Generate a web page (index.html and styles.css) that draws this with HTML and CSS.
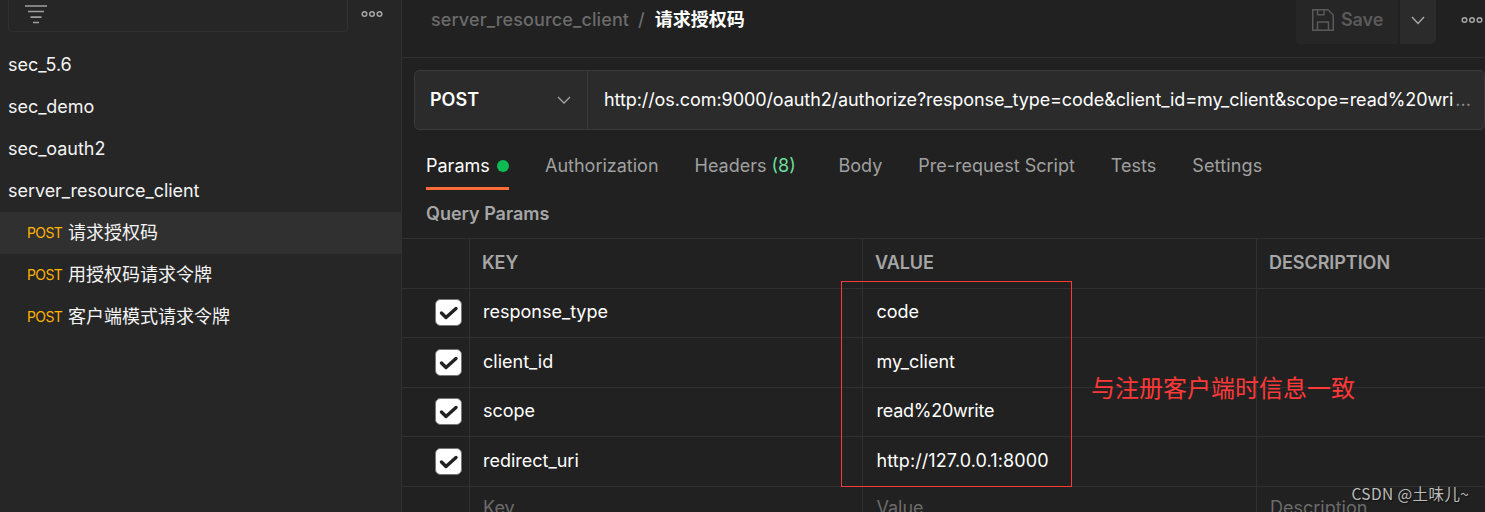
FILE: index.html
```html
<!DOCTYPE html>
<html lang="zh-CN">
<head>
<meta charset="utf-8">
<title>请求授权码</title>
<link rel="stylesheet" href="styles.css">
</head>
<body>
<div class="app">
  <aside class="sidebar">
    <div class="side-top">
      <div class="filter">
        <svg class="filter-icon" width="22" height="19" viewBox="0 0 22 19"><path d="M0 1h22M3 6.500h16M5.500 12.200h11M8 17.500h6" stroke="#a0a0a0" stroke-width="1.700"/></svg>
      </div>
      <svg class="dots" width="22" height="8" viewBox="0 0 22 8"><g fill="none" stroke="#a6a6a6" stroke-width="1.500"><circle cx="3.500" cy="4" r="2.300"/><circle cx="11" cy="4" r="2.300"/><circle cx="18.500" cy="4" r="2.300"/></g></svg>
    </div>
    <div class="collection">sec_5.6</div>
    <div class="collection">sec_demo</div>
    <div class="collection">sec_oauth2</div>
    <div class="collection">server_resource_client</div>
    <div class="request selected"><span class="verb">POST</span><span>请求授权码</span></div>
    <div class="request"><span class="verb">POST</span><span>用授权码请求令牌</span></div>
    <div class="request"><span class="verb">POST</span><span>客户端模式请求令牌</span></div>
  </aside>
  <main class="main">
    <header class="header">
      <div class="crumbs"><span class="crumb-parent">server_resource_client</span><span class="slash">/</span><span class="crumb-name">请求授权码</span></div>
      <div class="actions">
        <div class="save">
          <svg width="22" height="22" viewBox="0 0 22 22"><path d="M.75.75H16L21.250 6v15.250H.75zM5.500.75v5h6.500v-5M5.500 21v-8h11v8" fill="none" stroke="#5a5a5a" stroke-width="1.500" stroke-linejoin="round"/></svg>
          <span>Save</span>
        </div>
        <div class="save-more"><svg width="14" height="9" viewBox="0 0 14 9"><path d="M1 1l6 6.500L13 1" fill="none" stroke="#a6a6a6" stroke-width="1.500"/></svg></div>
        <svg class="dots" width="22" height="8" viewBox="0 0 22 8"><g fill="none" stroke="#a6a6a6" stroke-width="1.500"><circle cx="3.500" cy="4" r="2.300"/><circle cx="11" cy="4" r="2.300"/><circle cx="18.500" cy="4" r="2.300"/></g></svg>
      </div>
    </header>
    <div class="urlbar">
      <div class="method"><span>POST</span><svg width="14" height="9" viewBox="0 0 14 9"><path d="M1 1l6 6L13 1" fill="none" stroke="#a6a6a6" stroke-width="1.300"/></svg></div>
      <div class="url"><span class="url-text">http://os.com:9000/oauth2/authorize?response_type=code&amp;client_id=my_client&amp;scope=read%20wri</span><span class="more">...</span></div>
    </div>
    <nav class="tabs">
      <div class="tab active"><span>Params</span><i class="green-dot"></i></div>
      <div class="tab">Authorization</div>
      <div class="tab headers">Headers <span class="count">(8)</span></div>
      <div class="tab">Body</div>
      <div class="tab">Pre-request Script</div>
      <div class="tab">Tests</div>
      <div class="tab settings">Settings</div>
    </nav>
    <div class="section-title"><span>Query Params</span></div>
    <div class="grid">
      <div class="row head"><div class="cell"></div><div class="cell">KEY</div><div class="cell">VALUE</div><div class="cell">DESCRIPTION</div></div>
      <div class="row"><div class="cell check"><svg width="27" height="27" viewBox="0 0 27 27"><rect x=".5" y=".5" width="26" height="26" rx="5" fill="#fff" stroke="#777"/><path d="M6.500 14l4.500 4.500L21 9.500" fill="none" stroke="#212121" stroke-width="3.400" stroke-linecap="round" stroke-linejoin="round"/></svg></div><div class="cell">response_type</div><div class="cell">code</div><div class="cell"></div></div>
      <div class="row tall"><div class="cell check"><svg width="27" height="27" viewBox="0 0 27 27"><rect x=".5" y=".5" width="26" height="26" rx="5" fill="#fff" stroke="#777"/><path d="M6.500 14l4.500 4.500L21 9.500" fill="none" stroke="#212121" stroke-width="3.400" stroke-linecap="round" stroke-linejoin="round"/></svg></div><div class="cell">client_id</div><div class="cell">my_client</div><div class="cell"></div></div>
      <div class="row"><div class="cell check"><svg width="27" height="27" viewBox="0 0 27 27"><rect x=".5" y=".5" width="26" height="26" rx="5" fill="#fff" stroke="#777"/><path d="M6.500 14l4.500 4.500L21 9.500" fill="none" stroke="#212121" stroke-width="3.400" stroke-linecap="round" stroke-linejoin="round"/></svg></div><div class="cell">scope</div><div class="cell encoded">read%20write</div><div class="cell"></div></div>
      <div class="row tall"><div class="cell check"><svg width="27" height="27" viewBox="0 0 27 27"><rect x=".5" y=".5" width="26" height="26" rx="5" fill="#fff" stroke="#777"/><path d="M6.500 14l4.500 4.500L21 9.500" fill="none" stroke="#212121" stroke-width="3.400" stroke-linecap="round" stroke-linejoin="round"/></svg></div><div class="cell">redirect_uri</div><div class="cell address">http://127.0.0.1:8000</div><div class="cell"></div></div>
      <div class="row blank"><div class="cell"></div><div class="cell">Key</div><div class="cell">Value</div><div class="cell">Description</div></div>
    </div>
  </main>
  <div class="note-box"></div>
  <div class="note">与注册客户端时信息一致</div>
  <div class="watermark">CSDN @土味儿~</div>
</div>
</body>
</html>
```
FILE: styles.css
```css
* { box-sizing: border-box; }
body {
  margin: 0;
  background: #212121;
  color: #fff;
  font: 18px/24px Inter, "Noto Sans CJK SC", sans-serif;
  white-space: nowrap;
}
svg { display: block; flex: none; }
.app { position: relative; display: flex; width: 1485px; height: 512px; overflow: hidden; }

.sidebar { width: 402px; flex: none; background: #262626; border-right: 1px solid #303030; }
.side-top { display: flex; height: 44px; padding-left: 8px; align-items: flex-start; }
.filter {
  width: 340px; height: 32px; padding: 5px 0 0 16px;
  border: 1px solid #303030; border-top: 0; border-radius: 0 0 4px 4px;
}
.side-top .dots { margin: 10px 0 0 13px; }
.collection { height: 42px; padding: 9px 0 0 8px; color: #f4f4f4; letter-spacing: -.04px; }
.request { display: flex; height: 42px; padding-left: 27px; align-items: center; color: #f4f4f4; }
.verb { width: 41px; color: #ffb400; font-size: 14px; letter-spacing: -.6px; }
.request.selected { background: #303030; }

.main { flex: 1; min-width: 0; display: flex; flex-direction: column; }
.header { display: flex; flex: none; justify-content: space-between; height: 58px; border-bottom: 1px solid #303030; }
.crumbs { display: flex; padding: 8px 0 0 29px; color: #6b6b6b; font-weight: 500; }
.crumb-parent { letter-spacing: .12px; }
.slash { margin: 0 10px 0 9px; }
.crumb-name { color: #fff; font-weight: 700; }
.actions { display: flex; }
.save {
  display: flex; gap: 7px; width: 102px; height: 44px; padding: 9px 0 0 16px;
  margin-right: 2px; background: #262626; color: #5a5a5a; font-weight: 600; border-radius: 0 0 4px 4px;
}
.save span { margin-top: -1px; letter-spacing: -.1px; }
.save-more { display: flex; width: 36px; height: 44px; padding: 16px 0 0 11px; background: #2b2b2b; border-radius: 0 0 5px 0; }
.actions .dots { margin: 16px 2px 0 25px; }

.urlbar {
  display: flex; flex: none; height: 60px; margin: 12px 0 0 12px;
  background: #2b2b2b; border: 1px solid #3a3a3a; border-radius: 5px;
}
.method {
  display: flex; justify-content: space-between; align-items: center;
  width: 173px; padding: 0 16px 0 15px; border-right: 1px solid #3a3a3a; font-weight: 600;
}
.url { display: flex; align-items: center; flex: 1; padding-left: 16px; }
.url-text { letter-spacing: -.08px; }
.more { margin-left: 2px; color: #8c8c8c; }

.tabs { display: flex; flex: none; gap: 36px; height: 60px; padding-left: 24px; color: #a0a0a0; }
.tab { height: 60px; padding-top: 24px; }
.tab.active { display: flex; gap: 7px; width: 83px; color: #fff; border-bottom: 3px solid #ff6c37; }
.tab.headers { margin-right: 6.700px; }
.tab.settings { letter-spacing: .15px; }
.green-dot { width: 12px; height: 12px; margin-top: 6px; border-radius: 50%; background: #0cbb52; }
.count { color: #6bdd9a; }
.section-title { flex: none; height: 48px; padding: 12px 0 0 24px; color: #a6a6a6; font-weight: 600; }

.grid { display: flex; flex-direction: column; border-top: 1px solid #303030; }
.row { display: grid; flex: none; grid-template-columns: 68px 393px 394px 1fr; height: 49px; border-bottom: 1px solid #303030; }
.row.tall { height: 50px; }
.cell { display: flex; align-items: center; padding: 0 0 2px 13px; border-right: 1px solid #303030; }
.cell:nth-child(3) { padding-left: 13.500px; }
.cell:last-child { border-right: 0; }
.cell.check { padding: 0 0 1px 33px; }
.tall .cell.check { padding-bottom: 0; }
.tall .cell { padding-bottom: 1px; }
.cell.encoded { letter-spacing: -.25px; }
.cell.address { letter-spacing: .1px; }
.row.head { height: 50px; color: #a6a6a6; font-weight: 600; }
.row.head .cell { padding: 0 0 1px 12px; letter-spacing: -.05px; }
.blank { color: #6b6b6b; border-bottom: 0; }
.blank .cell { align-items: flex-start; padding-top: 9px; }

.note-box { position: absolute; left: 841px; top: 281px; width: 231px; height: 206px; border: 1px solid #ff3838; }
.note { position: absolute; left: 1091px; top: 372px; color: #ff3838; font-size: 24px; line-height: 34px; }
.watermark { position: absolute; left: 1351.500px; top: 481px; color: #bcbcbc; font: 15.500px/24px "Noto Sans CJK SC", sans-serif; letter-spacing: .4px; text-shadow: 1px 1px 1px #111; }
```
